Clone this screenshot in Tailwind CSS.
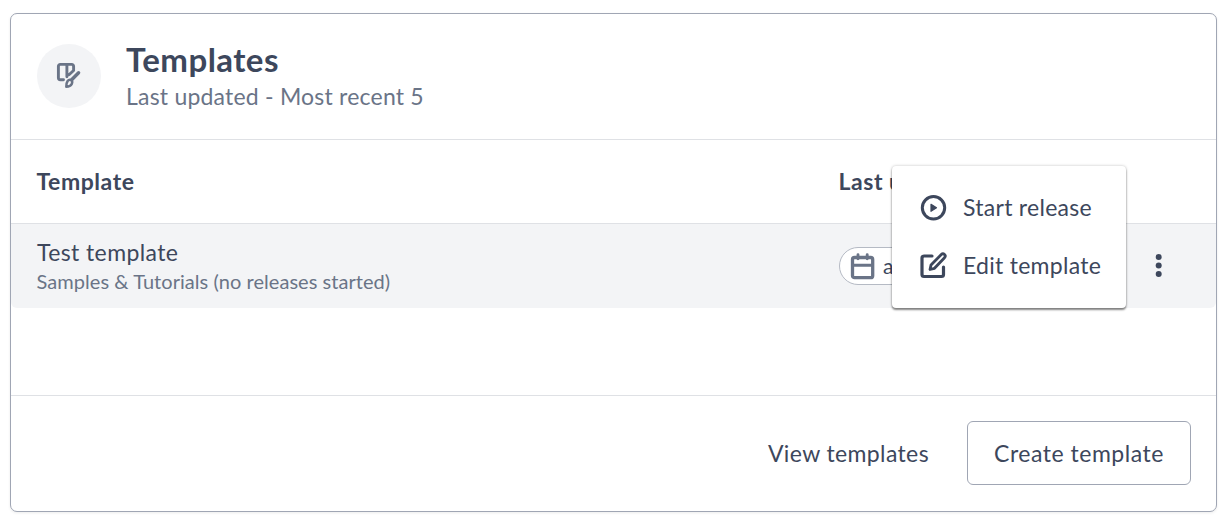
<!DOCTYPE html>
<html lang="en">
<head>
<meta charset="utf-8">
<title>Templates</title>
<script src="https://cdn.jsdelivr.net/npm/@tailwindcss/browser@4"></script>
</head>
<body class="h-[522px] overflow-hidden bg-white pt-[13px] pl-[10px] font-['Lato',sans-serif] text-[#3d475c]">
<main class="relative flex h-[499px] w-[1207px] flex-col rounded-[7px] border border-[#a0a6b4] bg-white shadow-[0_1px_3px_rgba(0,0,0,0.08)]">
  <header class="flex h-[126px] shrink-0 items-center border-b border-[#dfe1e5] pb-px pl-[26px]">
    <div class="flex size-16 items-center justify-center rounded-full bg-[#f3f4f6]">
      <svg class="size-8" viewBox="0 0 32 32" fill="none" stroke="#6a7487" stroke-width="2.900" stroke-linecap="round" stroke-linejoin="round">
        <path d="M10.500 19.800H7.400a2 2 0 0 1-2-2V6.200a1.800 1.800 0 0 1 1.800-1.800h11.600a1.800 1.800 0 0 1 1.800 1.800v4.300l-4.600 4.300M13.900 4.700v12" />
        <path d="M25.600 12.800l-6.900 6.900" stroke-width="3.400"/>
        <path d="M18.200 20c1.900 1.600 1.200 6.700-4.900 6.700c0-4.800 1.900-8 4.900-6.700z" stroke-width="2.500" />
      </svg>
    </div>
    <div class="ml-[25px] flex flex-col pt-[5px]">
      <h1 class="text-[33px] leading-[35px] font-bold tracking-[0.450px]">Templates</h1>
      <p class="pt-[0.500px] text-[23px] leading-[38px] tracking-[0.210px] text-[#6a7487]">Last updated - Most recent 5</p>
    </div>
  </header>
  <div class="flex h-[84px] shrink-0 items-center border-b border-[#dfe1e5] pl-[25.500px] text-[23px] font-bold tracking-[0.550px]">
    <div class="w-[802px]">Template</div>
    <div>Last updated</div>
  </div>
  <div class="flex h-[84px] shrink-0 items-center rounded-b-[6px] bg-[#f3f4f6] pl-[26px]">
    <div class="w-[802px] pb-px">
      <div class="text-[23px] leading-[30px] tracking-[0.400px]">Test template</div>
      <div class="-ml-px pl-[0.500px] text-[20px] leading-7 tracking-[0.050px] text-[#6a7487]">Samples &amp; Tutorials (no releases started)</div>
    </div>
    <div class="flex h-[38px] w-[190px] items-center rounded-full border border-[#b5bac4] bg-white pl-[10px]">
      <svg class="h-7 w-[26px]" viewBox="0 0 26 28" fill="none" stroke="#6a7487" stroke-width="3.300" stroke-linecap="round" stroke-linejoin="round">
        <rect x="2.500" y="5.500" width="20.200" height="20.200" rx="2" /><path d="M3 13.300h19" stroke-width="2.900" /><path d="M8 2.700v4M17.200 2.700v4" stroke-width="2.900" />
      </svg>
      <span class="ml-[7px] text-[21px]">a day ago</span>
    </div>
    <svg class="ml-[125.500px] h-8 w-2" viewBox="0 0 8 32" fill="#3d475c"><circle cx="3.700" cy="6.900" r="3"/><circle cx="3.700" cy="15.500" r="3"/><circle cx="3.700" cy="24.100" r="3"/></svg>
  </div>
  <div class="h-[87px] shrink-0"></div>
  <footer class="flex grow items-center justify-end border-t border-[#dfe1e5] pr-[25px] pb-px text-[23px]">
    <button class="mr-[38px] tracking-[0.380px]">View templates</button>
    <button class="h-16 w-[224px] rounded-[6px] border border-[#a0a6b4] tracking-[0.520px]">Create template</button>
  </footer>
  <div class="absolute top-[152px] left-[881px] flex h-[142px] w-[234px] flex-col justify-center rounded-[4px] bg-white pb-px pl-7 text-[23px] tracking-[0.280px] shadow-[0_2px_2px_rgba(0,0,0,0.45),0_0_3px_rgba(0,0,0,0.25)]">
    <div class="flex h-[58px] items-center gap-4">
      <svg class="size-[27px]" viewBox="0 0 27 27" fill="none" stroke="#3d475c" stroke-width="3" stroke-linejoin="round"><circle cx="13.500" cy="13.800" r="11.200"/><path d="M11 10.300v7l5.500-3.500z" fill="#3d475c" stroke-width="1.200"/></svg>
      <span>Start release</span>
    </div>
    <div class="flex h-[58px] items-center gap-4">
      <svg class="size-[27px]" viewBox="0 0 27 27" fill="none" stroke="#3d475c" stroke-width="3.200" stroke-linecap="round" stroke-linejoin="round"><path d="M12 4H4a2 2 0 0 0-2 2V22.500a2 2 0 0 0 2 2h17.500a2 2 0 0 0 2-2v-7.500"/><path d="M10 17.500l1-4.500L21.300 2.500a2.200 2.200 0 0 1 3.200 3.200L14.500 16.300z" stroke-width="2.800"/></svg>
      <span>Edit template</span>
    </div>
  </div>
</main>
</body>
</html>
